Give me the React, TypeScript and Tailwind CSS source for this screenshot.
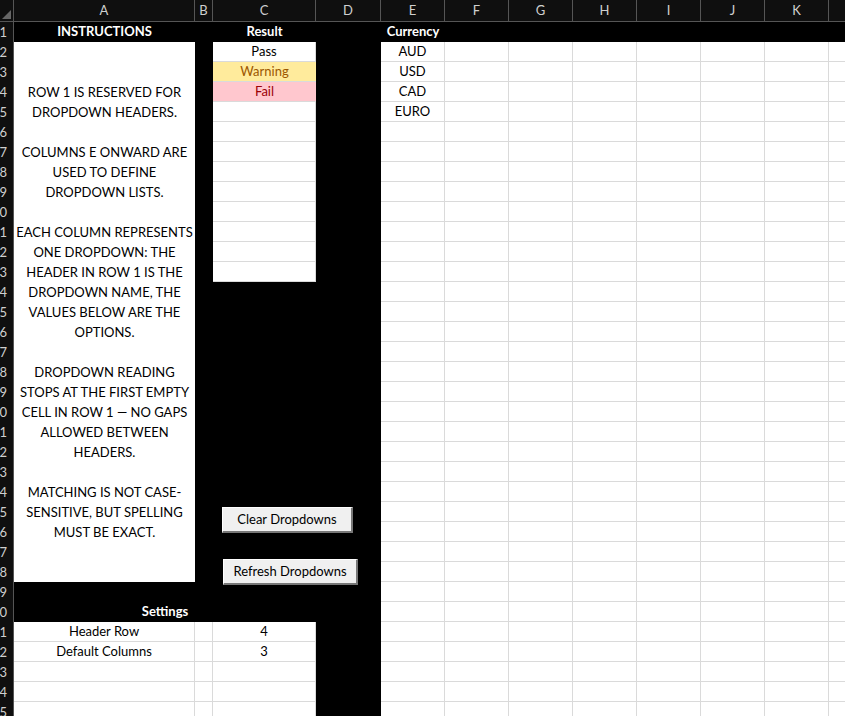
import React from "react";

const cols = ["A","B","C","D","E","F","G","H","I","J","K",""];
const lines = ["ROW 1 IS RESERVED FOR","DROPDOWN HEADERS.","","COLUMNS E ONWARD ARE","USED TO DEFINE","DROPDOWN LISTS.","","EACH COLUMN REPRESENTS","ONE DROPDOWN: THE","HEADER IN ROW 1 IS THE","DROPDOWN NAME, THE","VALUES BELOW ARE THE","OPTIONS.","","DROPDOWN READING","STOPS AT THE FIRST EMPTY","CELL IN ROW 1 — NO GAPS","ALLOWED BETWEEN","HEADERS.","","MATCHING IS NOT CASE-","SENSITIVE, BUT SPELLING","MUST BE EXACT."];
const cur = ["AUD","USD","CAD","EURO"];

function Cell({ r, c, cls = "", children }: { r: number; c: number; cls?: string; children?: React.ReactNode }) {
  return (
    <div className={"flex items-center justify-center overflow-visible whitespace-nowrap " + cls} style={{ gridRow: r + 1, gridColumn: c + 1 }}>
      {children}
    </div>
  );
}

export default function App() {
  const cells: React.ReactNode[] = [];
  const white = "bg-white border-r border-b border-[#dadada]";
  // header
  cells.push(<div key="corner" className="bg-[#0f0f0f] border-r border-b border-[#555] relative" style={{ gridRow: 1, gridColumn: 1 }}><div className="absolute right-[2px] bottom-[2px] w-0 h-0 border-l-[9px] border-l-transparent border-b-[9px] border-b-[#666]" /></div>);
  cols.forEach((l, i) => cells.push(<Cell key={"h" + i} r={0} c={i + 1} cls="bg-[#0f0f0f] text-[#cfcfcf] border-r border-b border-[#555] text-[13px]">{l}</Cell>));
  for (let r = 1; r <= 35; r++) {
    cells.push(<div key={"n" + r} className="bg-[#0f0f0f] text-[#cfcfcf] border-r border-[#555] text-[13px] overflow-hidden text-right pr-[6px] leading-[20px] flex justify-end" style={{ gridRow: r + 1, gridColumn: 1 }}><span>{r}</span></div>);
    for (let c = 1; c <= 12; c++) {
      let cls = "";
      let content: React.ReactNode = null;
      if (r === 1) {
        cls = "bg-black text-white font-bold";
        if (c === 1) content = "INSTRUCTIONS";
        if (c === 3) content = "Result";
        if (c === 5) content = "Currency";
      } else if (c === 1) {
        if (r <= 28) continue;
        else if (r <= 30) { if (r === 30) continue; cls = "bg-black"; }
        else { cls = white; if (r === 31) content = "Header Row"; if (r === 32) content = "Default Columns"; }
      } else if (c === 2) {
        if (r === 30) continue;
        cls = r <= 30 ? "bg-black" : white;
      } else if (c === 3) {
        if (r === 30) continue;
        if (r <= 13 || r >= 31) {
          cls = white;
          if (r === 2) content = "Pass";
          if (r === 3) { cls = "bg-[#ffeb9c] text-[#9c5700] border-b border-[#dadada]"; content = "Warning"; }
          if (r === 4) { cls = "bg-[#ffc7ce] text-[#9c0006] border-b border-[#dadada]"; content = "Fail"; }
          if (r === 31) content = "4";
          if (r === 32) content = "3";
        } else cls = "bg-black";
      } else if (c === 4) {
        cls = "bg-black";
      } else {
        cls = white;
        if (c === 5 && r >= 2 && r <= 5) content = cur[r - 2];
      }
      cells.push(<Cell key={r + "-" + c} r={r} c={c} cls={cls}>{content}</Cell>);
    }
  }
  return (
    <div className="w-[845px] h-[716px] overflow-hidden bg-white relative text-[13px] text-black" style={{ fontFamily: "Lato, 'Open Sans', sans-serif" }}>
      <div className="grid grid-cols-[14px_181px_18px_103px_65px_64px_64px_64px_64px_64px_64px_64px_64px] grid-rows-[22px_repeat(35,20px)]">
        {cells}
        <div className="bg-white flex flex-col justify-center items-center leading-[20px]" style={{ gridRow: "3 / 30", gridColumn: 2 }}>
          {lines.map((t, i) => <div key={i} className="h-[20px] whitespace-nowrap">{t}</div>)}
        </div>
        <div className="bg-black text-white font-bold flex items-center justify-center" style={{ gridRow: 31, gridColumn: "2 / 5" }}>Settings</div>
      </div>
      <button className="absolute left-[222px] top-[507px] w-[131px] h-[26px] bg-[#f0f0f0] border-r-2 border-b-2 border-[#777] border-t border-l border-t-white border-l-white text-[13px]">Clear Dropdowns</button>
      <button className="absolute left-[223px] top-[559px] w-[135px] h-[26px] bg-[#f0f0f0] border-r-2 border-b-2 border-[#777] border-t border-l border-t-white border-l-white text-[13px]">Refresh Dropdowns</button>
    </div>
  );
}
